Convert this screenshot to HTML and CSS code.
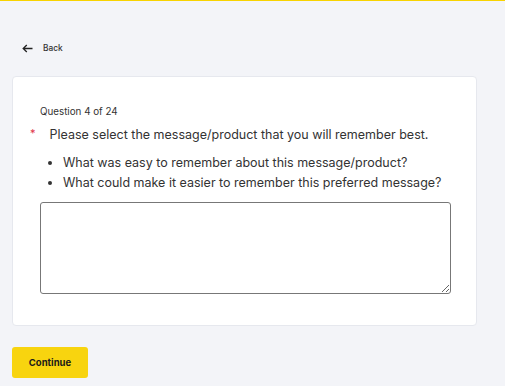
FILE: index.html
```html
<!DOCTYPE html>
<html lang="en">

<head>
  <meta charset="UTF-8">
  <meta name="viewport" content="width=device-width, initial-scale=1.0">
  <title>Survey</title>
  <link rel="stylesheet" href="styles.css">
</head>

<body>
  <div class="topbar"></div>
  <div class="page">
    <a class="back" href="#">
      <svg width="11" height="9" viewBox="0 0 11 9" fill="none" stroke="#222" stroke-width="1.3">
        <path d="M10.5 4.5H1.2M4.8 1 1.2 4.5 4.8 8" />
      </svg>
      <span>Back</span>
    </a>

    <div class="card">
      <p class="count">Question 4 of 24</p>
      <div class="question">
        <span class="req">*</span>
        <span>Please select the message/product that you will remember best.</span>
      </div>
      <ul class="hints">
        <li>What was easy to remember about this message/product?</li>
        <li>What could make it easier to remember this preferred message?</li>
      </ul>
      <textarea class="answer"></textarea>
    </div>

    <button class="continue" type="button">Continue</button>
  </div>
</body>

</html>
```

FILE: styles.css
```css
body {
  margin: 0;
  background: #f3f4f8;
  font-family: Inter, "Liberation Sans", sans-serif;
  color: #333;
}

p,
ul {
  margin: 0;
  padding: 0;
}

.topbar {
  height: 1px;
  background: #f8d300;
}

.page {
  padding: 38px 28px 0 12px;
}

.back {
  display: flex;
  align-items: center;
  gap: 10px;
  margin-left: 10px;
  font-size: 8.3px;
  font-weight: 500;
  color: #333;
  text-decoration: none;
  height: 18px;
}

.card {
  margin-top: 19px;
  background: #fff;
  border: 1px solid #e6e8ee;
  border-radius: 4px;
  padding: 29px 26px 31px 27px;
}

.count {
  font-size: 9.8px;
  line-height: 12px;
  color: #333;
}

.question {
  display: flex;
  gap: 14px;
  margin-top: 9px;
  margin-left: -10px;
  font-size: 12.5px;
  line-height: 16px;
}

.req {
  color: #e0334a;
  font-size: 11px;
  line-height: 12px;
}

.hints {
  margin-top: 10px;
  padding-left: 23px;
  font-size: 12.5px;
}

.hints li {
  line-height: 20px;
}

.answer {
  display: block;
  box-sizing: border-box;
  width: 411px;
  height: 92px;
  margin-top: 9px;
  border: 1px solid #777;
  border-radius: 3px;
}

.continue {
  margin-top: 21px;
  width: 76px;
  height: 31px;
  border: 0;
  border-radius: 3px;
  background: #f8d40f;
  font-family: Inter, "Liberation Sans", sans-serif;
  font-size: 9.5px;
  font-weight: 700;
  color: #1a1a1a;
}
```
